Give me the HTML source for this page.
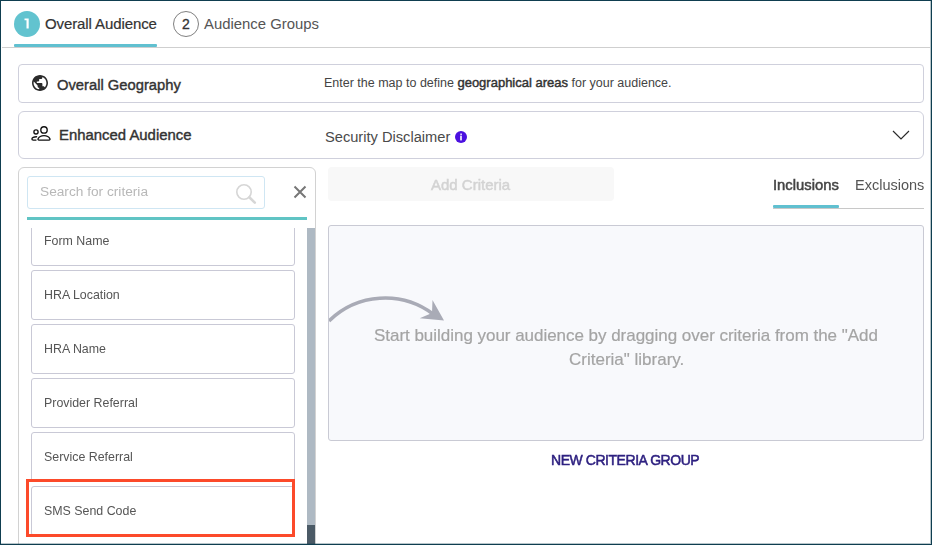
<!DOCTYPE html>
<html><head><meta charset="utf-8">
<style>
html,body{margin:0;padding:0;}
body{width:932px;height:545px;position:relative;overflow:hidden;background:#fff;font-family:"Liberation Sans",sans-serif;color:#333;}
.a{position:absolute;}
.g{will-change:transform;}
.t{position:absolute;white-space:nowrap;line-height:1;}
.frame{position:absolute;left:0;top:0;width:932px;height:545px;box-sizing:border-box;border-top:1px solid #0f3e50;border-left:1px solid #0f3e50;border-right:1px solid #0f3e50;border-bottom:1px solid #0f3e50;pointer-events:none;z-index:50;}
.card{position:absolute;box-sizing:border-box;border:1px solid #cfd0dc;background:#fff;}
.item{position:absolute;left:31px;width:264px;height:50px;box-sizing:border-box;border:1px solid #c9c9d6;border-radius:3px;background:#fff;}
.item span{will-change:transform;position:absolute;left:11.5px;white-space:nowrap;line-height:1;font-size:12.4px;color:#555;}
</style></head><body>

<!-- tabs -->
<div class="a" style="left:14px;top:11px;width:26px;height:26px;border-radius:50%;background:#62c3cf;"></div>
<svg class="a" style="left:14px;top:11px" width="26" height="26" viewBox="14 11 26 26"><path d="M24.5 18.4 H28.7 V28.5 H26.5 V20.3 H24.5 Z" fill="#fff"/></svg>
<div class="t" style="left:45px;top:16px;font-size:15px;color:#333;letter-spacing:-0.1px;-webkit-text-stroke:0.2px #333;">Overall Audience</div>
<div class="a" style="left:14px;top:44px;width:143px;height:3px;background:#60c0d0;border-radius:1px;"></div>
<div class="a" style="left:2px;top:47px;width:928px;height:1px;background:#cfcfcf;"></div>
<div class="a" style="left:173px;top:11px;width:26px;height:26px;box-sizing:border-box;border-radius:50%;border:1px solid #808080;"></div>
<div class="t" style="left:182px;top:16.7px;font-size:14px;color:#333;-webkit-text-stroke:0.3px #333;">2</div>
<div class="t" style="left:204px;top:16.5px;font-size:14.9px;color:#555;">Audience Groups</div>

<!-- card 1 -->
<div class="card" style="left:18px;top:64px;width:906px;height:39px;border-radius:4px;"></div>
<svg class="a" style="left:32px;top:75px" width="16" height="16" viewBox="2 2 20 20">
  <path fill="#2b2b2b" fill-rule="evenodd" d="M12 2C6.48 2 2 6.48 2 12s4.48 10 10 10 10-4.48 10-10S17.52 2 12 2zm-1 17.93c-3.95-.49-7-3.85-7-7.93 0-.62.08-1.21.21-1.79L9 15v1c0 1.1.9 2 2 2v1.93zm6.9-2.54c-.26-.81-1-1.39-1.9-1.39h-1v-3c0-.55-.45-1-1-1H8v-2h2c.55 0 1-.45 1-1V7h2c1.1 0 2-.9 2-2v-.41c2.93 1.190 5 4.06 5 7.41 0 2.08-.8 3.970-2.1 5.39z"/>
</svg>
<div class="t" style="left:57px;top:77.5px;font-size:14.75px;color:#333;-webkit-text-stroke:0.4px #333;">Overall Geography</div>
<div class="t" style="left:324px;top:76px;font-size:12.5px;color:#444;">Enter the map to define <span style="color:#333;-webkit-text-stroke:0.45px #333;font-size:13px;">geographical areas</span> for your audience.</div>

<!-- card 2 -->
<div class="card" style="left:18px;top:111px;width:906px;height:48px;border-radius:6px;"></div>
<svg class="a" style="left:31px;top:125px" width="21" height="17" viewBox="0 0 21 17">
  <g fill="none" stroke="#111" stroke-width="1.35" stroke-linecap="round">
    <circle cx="5" cy="6.9" r="2.1"/>
    <circle cx="13" cy="4.9" r="3.2"/>
    <path d="M5.6 11.75 C2.8 11.75 0.9 12.8 0.9 14 C0.9 14.8 1.5 15.05 2.3 15.05 L5 15.05"/>
    <path d="M8 15.05 L18 15.05 C18.9 15.05 19.2 14.5 18.9 13.8 C18 11.8 15.8 10.65 13 10.65 C10.2 10.65 8 11.8 7.1 13.8 C6.8 14.5 7.1 15.05 8 15.05 Z"/>
  </g>
</svg>
<div class="t" style="left:59px;top:127.5px;font-size:14.9px;color:#333;-webkit-text-stroke:0.4px #333;">Enhanced Audience</div>
<div class="t" style="left:325px;top:130px;font-size:14.65px;color:#4a4a4a;">Security Disclaimer</div>
<svg class="a" style="left:455px;top:131px" width="12" height="12" viewBox="0 0 12 12">
  <circle cx="6" cy="6" r="6" fill="#4b10e0"/>
  <rect x="5.2" y="2.6" width="1.8" height="1.2" fill="#fff"/>
  <rect x="5.2" y="4.6" width="1.6" height="4.8" fill="#fff"/>
</svg>
<svg class="a" style="left:890px;top:128px" width="22" height="14" viewBox="0 0 22 14">
  <path d="M3 3 L11 11 L19 3" fill="none" stroke="#2a2a2a" stroke-width="1.15"/>
</svg>

<!-- left panel -->
<div class="card" style="left:18px;top:167px;width:298px;height:400px;border-radius:6px;border-color:#d2d2d2;"></div>
<div class="a" style="left:27px;top:176px;width:238px;height:33px;box-sizing:border-box;border:1px solid #cfe6f3;border-radius:3px;"></div>
<div class="t g" style="left:40px;top:185px;font-size:13.7px;color:#b8b8b8;">Search for criteria</div>
<svg class="a" style="left:234px;top:182px" width="24" height="24" viewBox="0 0 24 24">
  <circle cx="10" cy="10" r="7.2" fill="none" stroke="#d6d6d6" stroke-width="1.6"/>
  <path d="M15.3 15.3 L20.8 20.6" stroke="#d6d6d6" stroke-width="2.6" stroke-linecap="round"/>
</svg>
<svg class="a" style="left:292px;top:184px" width="16" height="16" viewBox="0 0 16 16">
  <path d="M2.5 2.5 L13.5 13.5 M13.5 2.5 L2.5 13.5" stroke="#777" stroke-width="2"/>
</svg>
<div class="a" style="left:27px;top:217px;width:280px;height:3px;background:#60c4c4;"></div>

<div class="a" style="left:19px;top:228px;width:288px;height:316px;overflow:hidden;">
  <div class="item" style="left:12px;top:-12px;"><span style="top:18px;">Form Name</span></div>
</div>
<div class="item" style="top:270px;"><span style="top:18px;">HRA Location</span></div>
<div class="item" style="top:324px;"><span style="top:18px;">HRA Name</span></div>
<div class="item" style="top:378px;"><span style="top:18px;">Provider Referral</span></div>
<div class="item" style="top:432px;"><span style="top:18px;">Service Referral</span></div>
<div class="item" style="top:486px;"><span style="top:18px;">SMS Send Code</span></div>
<div class="a" style="left:26px;top:479px;width:269px;height:58px;box-sizing:border-box;border:3px solid #fc4a2a;"></div>
<div class="a" style="left:307px;top:228px;width:8px;height:317px;background:#aeb9c3;"></div>
<div class="a" style="left:307px;top:525px;width:8px;height:20px;background:#4b5a66;"></div>

<!-- right side -->
<div class="a" style="left:328px;top:167px;width:286px;height:34px;border-radius:4px;background:#f8f8f8;"></div>
<div class="t g" style="left:431px;top:177px;font-size:15px;color:#d3d3d3;-webkit-text-stroke:0.5px #d3d3d3;">Add Criteria</div>
<div class="t g" style="left:773px;top:177.5px;font-size:14.8px;color:#444;-webkit-text-stroke:0.5px #444;">Inclusions</div>
<div class="t g" style="left:854.5px;top:178px;font-size:14.5px;color:#555;">Exclusions</div>
<div class="a" style="left:773px;top:208px;width:151px;height:1px;background:#c8c8c8;"></div>
<div class="a" style="left:773px;top:205px;width:66px;height:3px;background:#60c0d0;border-radius:1px;"></div>

<div class="card" style="left:328px;top:225px;width:596px;height:216px;border-radius:3px;background:#f8f9fc;border-color:#c9cad4;"></div>
<svg class="a" style="left:329px;top:290px;" width="120" height="40" viewBox="329 290 120 40">
  <path d="M329 320.9 A80 80 0 0 1 433 314" fill="none" stroke="#a9abb6" stroke-width="3.6"/>
  <path d="M432.5 300 L444 320.5 L419.7 318.3 L432 313 Z" fill="#a9abb6"/>
</svg>
<div class="t g" style="left:374px;top:327px;font-size:17px;color:#a4a4a4;letter-spacing:-0.03px;-webkit-text-stroke:0.2px #a4a4a4;">Start building your audience by dragging over criteria from the "Add</div>
<div class="t g" style="left:568.5px;top:351px;font-size:17px;color:#a4a4a4;-webkit-text-stroke:0.2px #a4a4a4;">Criteria" library.</div>
<div class="t g" style="left:551px;top:453px;font-size:14px;color:#2e2180;-webkit-text-stroke:0.5px #2e2180;letter-spacing:-0.45px;">NEW CRITERIA GROUP</div>

<div class="frame"></div>
<div class="a" style="left:930px;top:0;width:1px;height:544px;background:rgba(15,62,80,0.3);z-index:51"></div>
<div class="a" style="left:0;top:543px;width:930px;height:1px;background:rgba(15,62,80,0.3);z-index:51"></div>
</body></html>
